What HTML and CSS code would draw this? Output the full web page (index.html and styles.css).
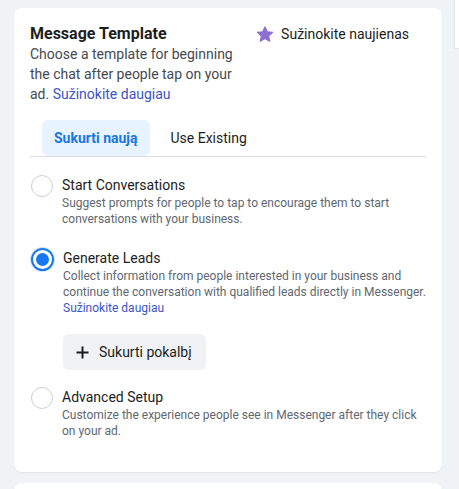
FILE: index.html
```html
<!DOCTYPE html>
<html lang="en">
<head>
    <meta charset="UTF-8">
    <meta name="viewport" content="width=device-width, initial-scale=1.0">
    <title>Message Template</title>
    <link rel="stylesheet" href="styles.css">
</head>
<body>
<div class="page">
    <div class="main-column">
        <div class="card">
            <div class="card-header">
                <div class="header-text">
                    <h2>Message Template</h2>
                    <p class="intro">Choose a template for beginning the chat after people tap on your ad. <a href="#">Sužinokite daugiau</a></p>
                </div>
                <a class="whats-new" href="#">
                    <svg width="18" height="17" viewBox="0 0 24 23"><path d="M12 1.2l3.1 6.6 7.1.8-5.3 4.9 1.5 7.1L12 17l-6.4 3.6 1.5-7.1L1.8 8.6l7.1-.8z" fill="#8c6fd0" stroke="#8c6fd0" stroke-width="1.6" stroke-linejoin="round"/></svg>
                    <span>Sužinokite naujienas</span>
                </a>
            </div>

            <div class="tabs">
                <button type="button" class="tab active">Sukurti naują</button>
                <button type="button" class="tab">Use Existing</button>
            </div>

            <div class="options">
                <label class="option">
                    <span class="radio"></span>
                    <span class="option-body">
                        <span class="option-title">Start Conversations</span>
                        <span class="option-desc">Suggest prompts for people to tap to encourage them to start conversations with your business.</span>
                    </span>
                </label>

                <label class="option">
                    <span class="radio checked"></span>
                    <span class="option-body">
                        <span class="option-title">Generate Leads</span>
                        <span class="option-desc">Collect information from people interested in your business and continue the conversation with qualified leads directly in Messenger. <a href="#">Sužinokite daugiau</a></span>
                        <button type="button" class="create-btn">
                            <svg width="13" height="13" viewBox="0 0 13 13"><path d="M6.5 0.5v12M0.5 6.5h12" stroke="#1c1e21" stroke-width="2"/></svg>
                            <span>Sukurti pokalbį</span>
                        </button>
                    </span>
                </label>

                <label class="option">
                    <span class="radio"></span>
                    <span class="option-body">
                        <span class="option-title">Advanced Setup</span>
                        <span class="option-desc">Customize the experience people see in Messenger after they click on your ad.</span>
                    </span>
                </label>
            </div>
        </div>
        <div class="card next-card"></div>
    </div>
    <div class="side-panel"></div>
</div>
</body>
</html>
```

FILE: styles.css
```css
body {
    margin: 0;
    background-color: #f0f2f5;
    font-family: Roboto, 'Liberation Sans', sans-serif;
    color: #1c1e21;
    overflow: hidden;
}

a {
    color: #3b55c9;
    text-decoration: none;
}

.page {
    display: flex;
    align-items: flex-start;
    padding-left: 14px;
}

.main-column {
    width: 428px;
    flex-shrink: 0;
    padding-top: 8px;
}

.card {
    background-color: #ffffff;
    border-radius: 8px;
    box-shadow: 0 1px 2px rgba(0, 0, 0, 0.06);
    padding: 16px 16px 33px;
}

.next-card {
    margin-top: 11px;
    height: 40px;
    padding: 0;
}

.side-panel {
    margin-left: 12px;
    width: 20px;
    height: 48px;
    background-color: #ffffff;
    border: 1px solid #e4e6eb;
    border-top: none;
    flex-shrink: 0;
}

/* header */
.card-header {
    display: flex;
    justify-content: space-between;
    align-items: flex-start;
}

.header-text {
    width: 212px;
}

h2 {
    margin: 0;
    font-size: 16px;
    line-height: 20px;
    font-weight: 700;
    color: #1c1e21;
}

.intro {
    margin: 0;
    font-size: 14px;
    line-height: 20px;
    color: #444950;
}

.whats-new {
    display: flex;
    align-items: center;
    gap: 7px;
    margin-right: 17px;
    margin-top: 0;
    color: #1c1e21;
    font-size: 14px;
    line-height: 20px;
}

/* tabs */
.tabs {
    display: flex;
    gap: 0;
    margin-top: 16px;
    padding-left: 12px;
    border-bottom: 1px solid #dadde1;
}

.tab {
    height: 36px;
    padding: 0 12px;
    border: none;
    border-radius: 6px;
    background: none;
    font-family: inherit;
    font-size: 14px;
    color: #1c1e21;
    cursor: pointer;
}

.tab + .tab {
    margin-left: 9px;
}

.tab.active {
    background-color: #e7f3ff;
    color: #1b74e4;
    font-weight: 700;
}

/* radio options */
.options {
    display: flex;
    flex-direction: column;
    gap: 21px;
    margin-top: 18px;
}

.option {
    display: flex;
    gap: 9px;
    cursor: pointer;
}

.radio {
    flex-shrink: 0;
    width: 20px;
    height: 20px;
    margin-left: 1px;
    border: 1px solid #ccd0d5;
    border-radius: 50%;
    position: relative;
}

.radio.checked {
    border: 2px solid #1877f2;
    width: 19px;
    height: 19px;
    box-shadow: 0 0 0 1px #cfe2fc;
}

.radio.checked::after {
    content: '';
    position: absolute;
    top: 3px;
    left: 3px;
    width: 13px;
    height: 13px;
    border-radius: 50%;
    background-color: #1877f2;
}

.option-body {
    display: flex;
    flex-direction: column;
    align-items: flex-start;
}

.option-title {
    font-size: 14px;
    line-height: 20px;
    color: #1c1e21;
}

.option-desc {
    font-size: 12px;
    line-height: 16px;
    color: #606770;
}

.create-btn {
    display: flex;
    align-items: center;
    gap: 10px;
    margin-top: 18px;
    margin-bottom: -4px;
    height: 36px;
    padding: 0 14px 0 13px;
    border: none;
    border-radius: 6px;
    background-color: #f0f2f5;
    font-family: inherit;
    font-size: 14px;
    color: #1c1e21;
    cursor: pointer;
}
```
